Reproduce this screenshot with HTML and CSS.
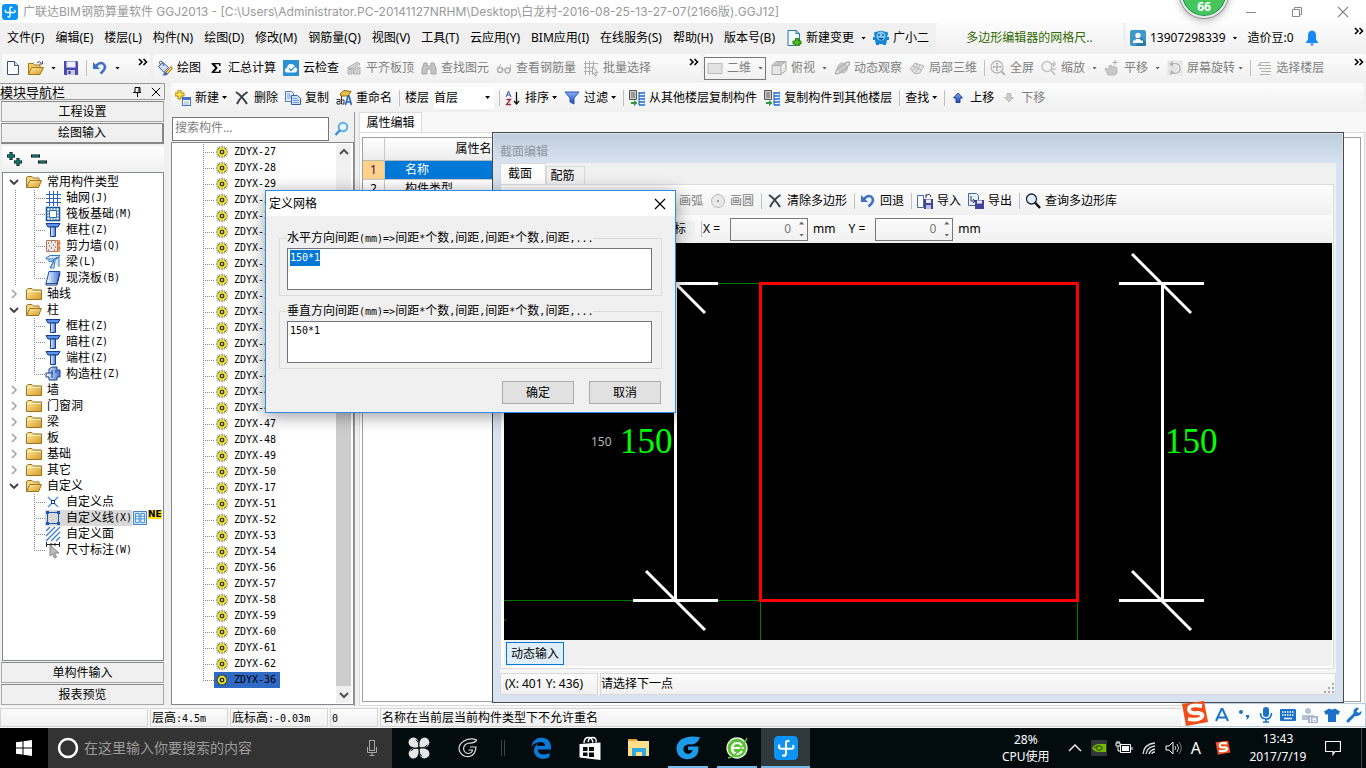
FILE: index.html
```html
<!DOCTYPE html>
<html lang="zh-CN">
<head>
<meta charset="utf-8">
<title>广联达BIM钢筋算量软件 GGJ2013</title>
<link rel="stylesheet" href="styles.css">
</head>
<body>
<svg class="defs" aria-hidden="true">
  <defs>
    <linearGradient id="gf" x1="0" y1="0" x2="1" y2="1"><stop offset="0" stop-color="#fff0b0"/><stop offset="1" stop-color="#d9981c"/></linearGradient>
    <linearGradient id="gb" x1="0" y1="0" x2="1" y2="0"><stop offset="0" stop-color="#fff"/><stop offset="1" stop-color="#3f74d8"/></linearGradient>
    <linearGradient id="gu" x1="0" y1="0" x2="0" y2="1"><stop offset="0" stop-color="#86aef5"/><stop offset="1" stop-color="#1d49b8"/></linearGradient>
  </defs>
  <symbol id="logo" viewBox="0 0 16 16"><rect width="16" height="16" rx="3" fill="#0c93f3"/><path d="M8 11.500V4.500Q8 2.800 9.800 3.300M3.500 6.300Q2.800 8.500 5 8.500h6.500q2 0 1.300-2M8 11.500q0 2-2 1.500" fill="none" stroke="#fff" stroke-width="1.400" stroke-linecap="round"/></symbol>
  <symbol id="new" viewBox="0 0 16 16"><path d="M2.500 1.500h7l4 4v9h-11z" fill="#fff" stroke="#36527c"/><path d="M9.500 1.500v4h4" fill="#d8e4f6" stroke="#36527c"/></symbol>
  <symbol id="open" viewBox="0 0 16 16"><path d="M.5 14V3.500h5l1 1.500H12v3" fill="#f3cf6d" stroke="#a87510"/><path d="M.5 14.500 3.500 7.500H15.500L12 14.500z" fill="url(#gf)" stroke="#a87510"/><path d="M9 2.500q3-2 4.500 1M14.500 1v3h-3" fill="none" stroke="#456"/></symbol>
  <symbol id="save" viewBox="0 0 16 16"><path d="M1 1h13l1 1v13H1z" fill="#4a4ab0"/><path d="M3.500 1.500h9v6h-9z" fill="#eef0ff"/><path d="M4 10h8v5H4z" fill="#c8c8e0"/><path d="M5.500 11h2v3h-2z" fill="#33338a"/></symbol>
  <symbol id="undo" viewBox="0 0 16 16"><path d="M4 6Q9 .8 12 4.500T8.500 13.500" fill="none" stroke="#3d70c9" stroke-width="2.600"/><path d="M1 2v7h7z" fill="#3d70c9"/></symbol>
  <symbol id="paint" viewBox="0 0 16 16"><path d="M1.500 6.500 6 2.500l5.500 5-4.500 5z" fill="#d2def2" stroke="#39588e"/><path d="M3.500 5Q1 0 5 1.500L7 6" fill="none" stroke="#39588e"/><path d="M8.500 13 14 6.500l1.500 1.500-5 6z" fill="#ffd466" stroke="#9a700d"/><path d="M5.500 15.500 8 12l3 2q-2 2-5.500 1.500z" fill="#2b63c5"/></symbol>
  <symbol id="sigma" viewBox="0 0 16 16"><path d="M3.500 3h9v3h-1.200L10.700 4.300H7L9.800 8 6.500 11.700h4.300L11.500 10h1.200v3H3.500v-1L7.200 8 3.500 4z" fill="#111"/></symbol>
  <symbol id="cloud" viewBox="0 0 16 16"><rect width="16" height="16" fill="#2a92d4"/><path d="M4 12.500Q1.300 12 2 9.500 2.500 8 4 8 4.500 4 8 4q3 0 4 3.200 2.500.5 2.200 3-.5 2.300-2.500 2.300z" fill="#fff"/><path d="m6 8.500 2 2L11.500 7" fill="none" stroke="#2a92d4" stroke-width="1.300"/></symbol>
  <symbol id="slab" viewBox="0 0 16 16"><path d="M1.500 8 11 2l3 2-7 5zM2 9.500h4V14H2zM7.500 9.500 14 7v7H7.500z" fill="#d0d0d0" stroke="#b0b0b0"/></symbol>
  <symbol id="bino" viewBox="0 0 16 16"><path d="M3 3h3v3h4V3h3l2 6v5h-5V9H6v5H1V9z" fill="#c4c4c4" stroke="#a5a5a5"/></symbol>
  <symbol id="glass" viewBox="0 0 16 16"><path d="M1.500 9 5 4M14.500 11V4.500" stroke="#b0b0b0"/><circle cx="4" cy="10" r="2.500" fill="none" stroke="#b0b0b0" stroke-width="1.500"/><circle cx="11.500" cy="10.500" r="2.500" fill="none" stroke="#b0b0b0" stroke-width="1.500"/><path d="M6.500 9.500h2.500" stroke="#b0b0b0"/></symbol>
  <symbol id="batch" viewBox="0 0 16 16"><path d="M2.500 1v14M6.500 1v14M10.500 1v7M1 3.500h14M1 7.500h9M1 11.500h8" stroke="#b0b0b0" fill="none"/><path d="m9.500 6.500 5.500 6h-2.500l1 3h-1.500l-1-2.500-1.500 1.500z" fill="#eee" stroke="#aaa"/></symbol>
  <symbol id="plane" viewBox="0 0 16 16"><rect x="1" y="3.500" width="14" height="10" fill="#e2e2e2" stroke="#bbb"/></symbol>
  <symbol id="cube" viewBox="0 0 16 16"><path d="M1 5.500h9v9H1zM1 5.500 5 1.500h10l-5 4zM10 14.500l5-4v-9" fill="#e6e6e6" stroke="#aaa"/><path d="M2 5 5.500 2H14l-4 3z" fill="#c4c4c4"/></symbol>
  <symbol id="orbit" viewBox="0 0 16 16"><circle cx="8.500" cy="8" r="5" fill="#ccc" stroke="#bbb"/><path d="M2 14Q0 12 6 7t9-5q2 2-4 7t-9 5z" fill="none" stroke="#b0b0b0" stroke-width="1.500"/></symbol>
  <symbol id="part3d" viewBox="0 0 16 16"><path d="m1 9 5-6 9 3-4 7-5 1zM3.500 6l9 4M6 13l5-8M3.500 11l5-7" fill="#e2e2e2" stroke="#b5b5b5"/></symbol>
  <symbol id="full" viewBox="0 0 16 16"><circle cx="7" cy="7" r="6" fill="#f2f2f2" stroke="#b8b8b8" stroke-width="1.300"/><path d="M7 3v8M3 7h8M6 4l1-1 1 1M6 10l1 1 1-1M4 6 3 7l1 1M10 6l1 1-1 1" stroke="#a5a5a5" fill="none"/><path d="m11.500 11.500 3.500 3.500" stroke="#b5b5b5" stroke-width="2"/></symbol>
  <symbol id="zoomi" viewBox="0 0 16 16"><circle cx="6" cy="6.500" r="5" fill="#f4f4f4" stroke="#c2c2c2" stroke-width="1.500"/><path d="m10 10 4 5" stroke="#c2c2c2" stroke-width="2"/><path d="M13 1v6M10 4h5M11 9h4" stroke="#b0b0b0"/></symbol>
  <symbol id="pan" viewBox="0 0 16 16"><path d="M4 15 1 9l2-1 2 2V6l2-1 1.500 1.500L10 6l1.500 1.500 1.500 0V13l-2 2z" fill="#c8c8c8" stroke="#bababa"/><path d="M11 0v5M8.500 2.500h5" stroke="#aaa"/></symbol>
  <symbol id="rot" viewBox="0 0 16 16"><path d="M.5.500h15v15H.5z" fill="#e4e4e4"/><path d="M4 13Q14 15 13 7 11 2 5 4" fill="none" stroke="#fff" stroke-width="3"/><path d="M4 13Q14 15 13 7 11 2 5 4" fill="none" stroke="#b5b5b5" stroke-width="1.500"/><path d="M6 1v6L2 4zM3 15l1-5 4 3z" fill="#b5b5b5"/></symbol>
  <symbol id="floors" viewBox="0 0 16 16"><path d="M4 2.500h10M5 5.500h10M3 8.500h12M5 11.500h10M4 14.500h10" stroke="#b0b0b0"/><path d="M1 6 5 2v4z" fill="#bbb"/></symbol>
  <symbol id="add" viewBox="0 0 16 16"><path d="M3 0h3v3h3v3H6v3H3V6H0V3h3z" fill="#ffe34d" stroke="#a8860b"/><rect x="7.500" y="7.500" width="8" height="8" fill="#fff" stroke="#4573c4"/><path d="M8 8h7v2H8z" fill="#4573c4"/><path d="M9 12h5M9 14h5" stroke="#86aee8"/></symbol>
  <symbol id="del" viewBox="0 0 16 16"><path d="M2 2q6 4 11 12M13.500 2Q7 6 3 14" fill="none" stroke="#3a3e48" stroke-width="2"/></symbol>
  <symbol id="copy" viewBox="0 0 16 16"><path d="M.5 1.500h6l2 2v8h-8z" fill="#e4eefc" stroke="#4f79b8"/><path d="M6.500 5.500h6l3 3v6h-9z" fill="#cfe0f8" stroke="#375f9f"/><path d="M2 4h3M2 6h4M2 8h4M8 8.500h4M8 10.500h6M8 12.500h6" stroke="#6e98d8"/></symbol>
  <symbol id="rename" viewBox="0 0 16 16"><path d="m4 4 4-3.500 7 1L12 6 5 6z" fill="#f0c04a" stroke="#89640c"/><path d="M.5 9.500H4V14H1v-2.500h3M5.500 6v8H8v-4H6" fill="none" stroke="#333"/><path d="m9.500 15 2.500-9h1l2.500 9M10.500 12h4" fill="none" stroke="#2665c0" stroke-width="1.600"/></symbol>
  <symbol id="sort" viewBox="0 0 16 16"><path d="m1 7 2.500-6L6 7M2 5h3" fill="none" stroke="#2b56a8"/><path d="M1.500 9.500h4l-4 5h4.500" fill="none" stroke="#a22b3b" stroke-width="1.300"/><path d="M11.500 2v11M9 11l2.500 3 2.500-3" fill="none" stroke="#111" stroke-width="1.300"/></symbol>
  <symbol id="filter" viewBox="0 0 16 16"><path d="M1 2h14L10 8v6l-4-2V8z" fill="url(#gu)" stroke="#2b57b8"/></symbol>
  <symbol id="xfer" viewBox="0 0 16 16"><path d="M.5.500h7v9h-7z" fill="#ccc" stroke="#555"/><path d="M2 3h4M2 5h4M2 7h4" stroke="#666"/><path d="M10 3h5l1-1M10 6h5l1-1M10 9h5l1-1M10 12h5l1-1M10 15h5l1-1" fill="none" stroke="#4c8de0" stroke-width="2"/><path d="M10 2v13" stroke="#2a4e88"/><path d="M2 12h3v-2l3.500 3L5 16v-2H2z" fill="#2a9a38"/></symbol>
  <symbol id="up" viewBox="0 0 16 16"><path d="m8 3 4.500 5H10v4.500H6V8H3.500z" fill="url(#gu)" stroke="#1f4392"/></symbol>
  <symbol id="down" viewBox="0 0 16 16"><path d="m8 12 4.500-4.500H10V3.500H6v4H3.500z" fill="#ccc" stroke="#bbb"/></symbol>
  <symbol id="docplus" viewBox="0 0 16 16"><path d="M2 .5h8l3.500 3v12H2z" fill="#eef9ff" stroke="#2d7896"/><path d="M10 .5v3h3.500" fill="#9fd4ea" stroke="#2d7896"/><path d="M9.500 8.500h3V11H15v3h-2.500v2h-3v-2H7v-3h2.500z" fill="#49c11b" stroke="#287a0b"/></symbol>
  <symbol id="robot" viewBox="0 0 16 16"><path d="M1 4Q1 1 3.500 2 8-.5 12.500 2 15 1 15 4l-1 3h2v3h-2l-1 5h-3v-1H6v1H3l-1-5H0V7h2z" fill="#1586d6"/><circle cx="8" cy="6" r="4.500" fill="#7cc8f8"/><path d="M6 4v2M10 4v2M6 8q2 2 4 0" stroke="#064a87" fill="none" stroke-width="1.200"/></symbol>
  <symbol id="user" viewBox="0 0 16 16"><rect width="16" height="16" rx="2" fill="#3d98cb"/><path d="M9 5 15.900 12v4H6z" fill="#2878a9"/><circle cx="8" cy="5.500" r="2.700" fill="#fff"/><path d="M3 13V10.500h2l1-1.500h4l1 1.500h2V13z" fill="#fff"/></symbol>
  <symbol id="bell" viewBox="0 0 16 16"><path d="M8 .5q4 .5 4 5v4l2.500 3.500h-13L4 9.500v-4q0-4.500 4-5zM6 13.500h4L8 16z" fill="#1687f5"/></symbol>
  <symbol id="more" viewBox="0 0 10 8"><path d="M1 1l3 3-3 3M5.500 1l3 3-3 3" fill="none" stroke="#000" stroke-width="1.600"/></symbol>
  <symbol id="mag" viewBox="0 0 16 16"><circle cx="9" cy="6" r="4.300" fill="#eaf6ff" stroke="#5aaeea" stroke-width="2"/><path d="m6 9-4.500 5" stroke="#3c8fd8" stroke-width="2.500"/></symbol>
  <symbol id="find" viewBox="0 0 16 16"><circle cx="6.500" cy="6" r="5" fill="#dff0fc" stroke="#182434" stroke-width="1.300"/><path d="m10 9.500 5 5.500" stroke="#111" stroke-width="2.500"/></symbol>
  <symbol id="folder" viewBox="0 0 16 16"><path d="M.5 13V4L2 2.500h4L7.500 4h8v9.500H.5z" fill="url(#gf)" stroke="#9b7423"/><path d="M1 5.500h14" stroke="#fff3c4"/></symbol>
  <symbol id="fopen" viewBox="0 0 16 16"><path d="M.5 13V3.500l1.500-1h4L7.500 4H13v3" fill="#f6d67f" stroke="#9b7423"/><path d="M.5 13.500 4 6.500h11.500L12.500 13.500z" fill="url(#gf)" stroke="#9b7423"/></symbol>
  <symbol id="grid" viewBox="0 0 16 16"><path d="M4.500 1v14M8.500 1v14M12.500 1v14M1 4.500h14M1 8.500h14M1 12.500h14" stroke="#2c5fc4"/><path d="M14 4h2v1h-2zM14 8h2v1h-2zM14 12h2v1h-2zM4 14h1v2H4zM8 14h1v2H8zM12 14h1v2h-1z" fill="#2c5fc4"/></symbol>
  <symbol id="raft" viewBox="0 0 16 16"><path d="M1.500 1.500h13v13h-13z" fill="#fff" stroke="#134f8c" stroke-width="1.500"/><path d="M4.500 4.500h7v7h-7zM5 1v3M8 1v3M11 1v3M5 12v3M8 12v3M11 12v3M1 5h3M1 8h3M1 11h3M12 5h3M12 8h3M12 11h3" fill="none" stroke="#2a70b8"/></symbol>
  <symbol id="col" viewBox="0 0 16 16"><path d="M1 1.500h14l-2 3.500H3z" fill="#5c92ea" stroke="#123e94"/><path d="M5.500 5h5v9.500h-5z" fill="url(#gb)" stroke="#123e94"/></symbol>
  <symbol id="wall" viewBox="0 0 16 16"><path d="M1.500 2.500h11v11h-11z" fill="#eee5df" stroke="#b7765c"/><path d="M14 2v12M12.500 5h3M12.500 10h3" fill="none" stroke="#d67d28" stroke-width="1.500"/><path d="M3 5h1M6 4h1M8 7h1M4 8h1M6 10h1M10 9h1M3 12h1M9 12h1M10 4h1" stroke="#444"/></symbol>
  <symbol id="beam" viewBox="0 0 16 16"><path d="M1 4 5 1.500h10L11 5H1zM4 5v3l5-2-4 8h4l1-8 4-3v10" fill="#d7eafc" stroke="#3479bd"/><path d="m6 8 6-5M6 13l3-6" stroke="#3479bd"/></symbol>
  <symbol id="slabb" viewBox="0 0 16 16"><path d="M4 1.500h11L12 13.500H1z" fill="url(#gb)" stroke="#1d4ba2"/><path d="M1 13.500v1.500h11l3-12" fill="none" stroke="#16366e"/></symbol>
  <symbol id="gz" viewBox="0 0 16 16"><path d="M4 3 7 1h5v3h3v7h-3v3H7l-3 0v-3H1V7h3z" fill="url(#gb)" stroke="#1a3e8a"/><path d="M7 4v8M4 7h4M11 4v3" stroke="#1a3e8a"/></symbol>
  <symbol id="pt" viewBox="0 0 16 16"><path d="m3 3 10 10M13 3 3 13" stroke="#4b94cc" stroke-width="1.400"/><rect x="6.500" y="6.500" width="3" height="3" fill="#fff" stroke="#123e94"/></symbol>
  <symbol id="ln" viewBox="0 0 16 16"><path d="M2.500 2.500h11v11h-11z" fill="none" stroke="#1958b5"/><path d="M1 1h3v3H1zM12 1h3v3h-3zM1 12h3v3H1zM12 12h3v3h-3z" fill="#1958b5"/></symbol>
  <symbol id="area" viewBox="0 0 16 16"><path d="m1 5 4-4M1 10l9-9M1 15 15 1M6 15l9-9M11 15l4-4" stroke="#3c7ccd" stroke-width="1.300"/></symbol>
  <symbol id="dimn" viewBox="0 0 16 16"><path d="M1.500 0v5M14.500 0v5M1 2.500h14M6 1v3M10 1v3" stroke="#222"/><path d="m5 3 9 8H9.500l2 4-2 1-2-4L5 14z" fill="#bbb" stroke="#888"/></symbol>
  <symbol id="book" viewBox="0 0 16 16"><path d="M.5.500h15v15H.5z" fill="#c5e4fb" stroke="#2a6eb0"/><path d="M3 3h4v10H3zM9 3h4v10H9zM3 6h4M3 9h4M9 6h4M9 9h4" fill="#fff" stroke="#2a80cc"/></symbol>
  <symbol id="gear" viewBox="0 0 12 12"><path d="M6 0v12M0 6h12M1.500 1.500l9 9M10.500 1.500l-9 9M3.800.5v11M8.200.5v11M.5 3.800h11M.5 8.200h11" stroke="#3e3b00" stroke-width=".8"/><circle cx="6" cy="6" r="3.400" fill="none" stroke="#f0ec16" stroke-width="1.800"/><circle cx="6" cy="6" r="1.500" fill="#ffc" stroke="#222"/></symbol>
  <symbol id="circ" viewBox="0 0 16 16"><circle cx="8" cy="8" r="6.500" fill="#e9e9e9" stroke="#bbb"/><circle cx="8" cy="8" r="1" fill="#888"/></symbol>
  <symbol id="imp" viewBox="0 0 16 16"><path d="M.5 2.500h6v12h-6z" fill="#fff" stroke="#4468a0"/><path d="M7 6h9v10H7z" fill="#43439f"/><path d="M9 6.500h5V10H9z" fill="#e9ecff"/><path d="M9 12h5v4H9z" fill="#bcbcdc"/><path d="M9 1v4M9 3q4-4 5 1" fill="none" stroke="#335"/></symbol>
  <symbol id="exp" viewBox="0 0 16 16"><path d="M.5.500h8l2 2v10H.5z" fill="#e5effc" stroke="#4468a0"/><path d="M7 7h9v9H7z" fill="#43439f"/><path d="M9 7.500h5v3H9z" fill="#e9ecff"/><path d="M3 3v5h4M5 6l2 2-2 2" fill="none" stroke="#335"/></symbol>
  <symbol id="chev" viewBox="0 0 10 10"><path d="m1 3 4 4 4-4" fill="none" stroke="#3c3c3c" stroke-width="1.800"/></symbol>
  <symbol id="chevr" viewBox="0 0 10 10"><path d="m3 1 4 4-4 4" fill="none" stroke="#a2a2a2" stroke-width="1.500"/></symbol>
  <symbol id="close" viewBox="0 0 12 12"><path d="m1 1 10 10M11 1 1 11" fill="none" stroke="currentColor" stroke-width="1.200"/></symbol>
  <symbol id="sogou" viewBox="0 0 28 26"><path d="M1 3 23 0 27 21 5 25z" fill="#f04e18"/><path d="M21 5Q8 3 8 8t9 4q7 1 3 5-4 2.500-13 1" fill="none" stroke="#fff" stroke-width="3.800"/></symbol>
</svg>

<div class="app">
  <header class="title">
    <svg class="i"><use href="#logo"/></svg>
    <h1>广联达BIM钢筋算量软件 GGJ2013 - [C:\Users\Administrator.PC-20141127NRHM\Desktop\白龙村-2016-08-25-13-27-07(2166版).GGJ12]</h1>
    <div class="winbtns">
      <button aria-label="最小化"><svg class="w"><path d="M1 6.500h10" stroke="#888"/></svg></button>
      <button aria-label="还原"><svg class="w"><path d="M1.500 3.500h7v7h-7zM3.500 3V1.500h7v7H9" fill="none" stroke="#888"/></svg></button>
      <button aria-label="关闭"><svg class="w"><use href="#close"/></svg></button>
    </div>
  </header>
  <div class="bubble">66</div>

  <div class="menubar">
    <nav class="menu">
      <button>文件(F)</button><button>编辑(E)</button><button>楼层(L)</button><button>构件(N)</button><button>绘图(D)</button><button>修改(M)</button><button>钢筋量(Q)</button><button>视图(V)</button><button>工具(T)</button><button>云应用(Y)</button><button>BIM应用(I)</button><button>在线服务(S)</button><button>帮助(H)</button><button>版本号(B)</button>
    </nav>
    <div class="extra">
      <button class="t"><svg class="i"><use href="#docplus"/></svg>新建变更<i class="caret wide"></i></button>
      <button class="t"><svg class="i"><use href="#robot"/></svg>广小二</button>
    </div>
    <div class="band notice"><a href="#">多边形编辑器的网格尺..</a></div>
    <div class="band account">
      <button class="t"><svg class="i"><use href="#user"/></svg>13907298339<i class="caret wide"></i></button>
      <span>造价豆:0</span>
      <button aria-label="通知"><svg class="i"><use href="#bell"/></svg></button>
      <button class="more" aria-label="更多"><svg><use href="#more"/></svg></button>
    </div>
  </div>

  <div class="bars">
    <div class="band b1">
      <button class="t" aria-label="新建"><svg class="i"><use href="#new"/></svg></button>
      <button class="t" aria-label="打开"><svg class="i"><use href="#open"/></svg><i class="caret wide"></i></button>
      <button class="t" aria-label="保存"><svg class="i"><use href="#save"/></svg></button>
      <i class="sep"></i>
      <button class="t" aria-label="撤销"><svg class="i"><use href="#undo"/></svg><i class="caret wide"></i></button>
      <button class="more" aria-label="更多"><svg><use href="#more"/></svg></button>
    </div>
    <div class="band b2">
      <button class="t"><svg class="i"><use href="#paint"/></svg>绘图</button>
      <button class="t"><svg class="i"><use href="#sigma"/></svg>汇总计算</button>
      <button class="t"><svg class="i"><use href="#cloud"/></svg>云检查</button>
      <button class="t off"><svg class="i"><use href="#slab"/></svg>平齐板顶</button>
      <button class="t off"><svg class="i"><use href="#bino"/></svg>查找图元</button>
      <button class="t off"><svg class="i"><use href="#glass"/></svg>查看钢筋量</button>
      <button class="t off"><svg class="i"><use href="#batch"/></svg>批量选择</button>
      <button class="more" aria-label="更多"><svg><use href="#more"/></svg></button>
    </div>
    <div class="band b3">
      <button class="t off boxed"><svg class="i"><use href="#plane"/></svg>二维<i class="caret wide"></i></button>
      <button class="t off"><svg class="i"><use href="#cube"/></svg>俯视<i class="caret wide"></i></button>
      <button class="t off"><svg class="i"><use href="#orbit"/></svg>动态观察</button>
      <button class="t off"><svg class="i"><use href="#part3d"/></svg>局部三维</button>
      <i class="sep"></i>
      <button class="t off"><svg class="i"><use href="#full"/></svg>全屏</button>
      <button class="t off"><svg class="i"><use href="#zoomi"/></svg>缩放<i class="caret wide"></i></button>
      <button class="t off"><svg class="i"><use href="#pan"/></svg>平移<i class="caret wide"></i></button>
      <button class="t off"><svg class="i"><use href="#rot"/></svg>屏幕旋转<i class="caret"></i></button>
      <i class="sep"></i>
      <button class="t off"><svg class="i"><use href="#floors"/></svg>选择楼层</button>
      <button class="more" aria-label="更多"><svg><use href="#more"/></svg></button>
    </div>
  </div>

  <main class="main">
    <aside class="nav">
      <div class="navhead"><h2>模块导航栏</h2><button aria-label="固定"><svg class="w"><path d="M4 1.500h5v5H4zM2 6.500h8M6.500 7v4M8 2v4" fill="none" stroke="#000"/></svg></button><button aria-label="关闭"><svg class="c"><use href="#close"/></svg></button></div>
      <button class="navbtn">工程设置</button>
      <button class="navbtn cur">绘图输入</button>
      <div class="navtools">
        <button aria-label="全部展开"><svg width="18" height="16"><path d="M1 5h8M5 1v8M8 11h8M12 7v8" stroke="#000" stroke-width="3"/><path d="M1.500 5h7M5 1.500v7M8.500 11h7M12 7.500v7" stroke="#0b8a84" stroke-width="1.500"/></svg></button>
        <button aria-label="全部折叠"><svg width="18" height="16"><path d="M1 5h9M8 11h9" stroke="#000" stroke-width="3"/><path d="M2 5h7M9 11h7" stroke="#0b8a84" stroke-width="1.500"/></svg></button>
      </div>
      <ul class="tree">
        <li class="p"><svg class="c"><use href="#chev"/></svg><svg class="i"><use href="#fopen"/></svg>常用构件类型</li>
        <li><ul class="kids line">
          <li><svg class="i"><use href="#grid"/></svg>轴网<span class="m">(J)</span></li>
          <li><svg class="i"><use href="#raft"/></svg>筏板基础<span class="m">(M)</span></li>
          <li><svg class="i"><use href="#col"/></svg>框柱<span class="m">(Z)</span></li>
          <li><svg class="i"><use href="#wall"/></svg>剪力墙<span class="m">(Q)</span></li>
          <li><svg class="i"><use href="#beam"/></svg>梁<span class="m">(L)</span></li>
          <li><svg class="i"><use href="#slabb"/></svg>现浇板<span class="m">(B)</span></li>
        </ul></li>
        <li class="p"><svg class="c"><use href="#chevr"/></svg><svg class="i"><use href="#folder"/></svg>轴线</li>
        <li class="p"><svg class="c"><use href="#chev"/></svg><svg class="i"><use href="#fopen"/></svg>柱</li>
        <li><ul class="kids line">
          <li><svg class="i"><use href="#col"/></svg>框柱<span class="m">(Z)</span></li>
          <li><svg class="i"><use href="#col"/></svg>暗柱<span class="m">(Z)</span></li>
          <li><svg class="i"><use href="#col"/></svg>端柱<span class="m">(Z)</span></li>
          <li><svg class="i"><use href="#gz"/></svg>构造柱<span class="m">(Z)</span></li>
        </ul></li>
        <li class="p"><svg class="c"><use href="#chevr"/></svg><svg class="i"><use href="#folder"/></svg>墙</li>
        <li class="p"><svg class="c"><use href="#chevr"/></svg><svg class="i"><use href="#folder"/></svg>门窗洞</li>
        <li class="p"><svg class="c"><use href="#chevr"/></svg><svg class="i"><use href="#folder"/></svg>梁</li>
        <li class="p"><svg class="c"><use href="#chevr"/></svg><svg class="i"><use href="#folder"/></svg>板</li>
        <li class="p"><svg class="c"><use href="#chevr"/></svg><svg class="i"><use href="#folder"/></svg>基础</li>
        <li class="p"><svg class="c"><use href="#chevr"/></svg><svg class="i"><use href="#folder"/></svg>其它</li>
        <li class="p"><svg class="c"><use href="#chev"/></svg><svg class="i"><use href="#fopen"/></svg>自定义</li>
        <li><ul class="kids">
          <li><svg class="i"><use href="#pt"/></svg>自定义点</li>
          <li><span class="sel"><svg class="i"><use href="#ln"/></svg>自定义线<span class="m">(X)</span></span><svg class="bk"><use href="#book"/></svg><b class="ne">NE</b></li>
          <li><svg class="i"><use href="#area"/></svg>自定义面</li>
          <li><svg class="i"><use href="#dimn"/></svg>尺寸标注<span class="m">(W)</span></li>
        </ul></li>
      </ul>
      <button class="navbtn">单构件输入</button>
      <button class="navbtn">报表预览</button>
    </aside>

    <div class="work">
      <div class="band b4">
        <button class="t"><svg class="i"><use href="#add"/></svg>新建<i class="caret"></i></button>
        <button class="t"><svg class="i"><use href="#del"/></svg>删除</button>
        <button class="t"><svg class="i"><use href="#copy"/></svg>复制</button>
        <button class="t"><svg class="i"><use href="#rename"/></svg>重命名</button>
        <i class="sep"></i>
        <label for="floor">楼层</label>
        <span class="pick"><select id="floor"><option>首层</option></select><i class="caret"></i></span>
        <i class="sep"></i>
        <button class="t"><svg class="i"><use href="#sort"/></svg>排序<i class="caret"></i></button>
        <button class="t"><svg class="i"><use href="#filter"/></svg>过滤<i class="caret"></i></button>
        <i class="sep"></i>
        <button class="t"><svg class="i"><use href="#xfer"/></svg>从其他楼层复制构件</button>
        <button class="t"><svg class="i"><use href="#xfer"/></svg>复制构件到其他楼层</button>
        <i class="sep"></i>
        <button class="t">查找<i class="caret"></i></button>
        <i class="sep"></i>
        <button class="t"><svg class="i"><use href="#up"/></svg>上移</button>
        <button class="t off"><svg class="i"><use href="#down"/></svg>下移</button>
      </div>
      <div class="cols">
        <section class="comps">
          <div class="search"><input type="text" placeholder="搜索构件…" aria-label="搜索构件"><button aria-label="搜索"><svg class="i"><use href="#mag"/></svg></button></div>
          <div class="listbox">
            <ul class="list" id="list"></ul>
            <div class="scroll"><svg class="c"><path d="m1 7 4-4 4 4" fill="none" stroke="#505050" stroke-width="2"/></svg><i></i><svg class="c"><path d="m1 3 4 4 4-4" fill="none" stroke="#505050" stroke-width="2"/></svg></div>
          </div>
        </section>
        <section class="props">
          <div class="ptabs"><button class="ptab">属性编辑</button></div>
          <div class="pbody">
            <div class="pbox">
              <table class="ptable">
                <thead><tr><th class="n"></th><th class="k">属性名称</th><th>属性值</th><th class="a">附加</th></tr></thead>
                <tbody>
                  <tr class="on"><td class="n">1</td><td>名称</td><td>ZDYX-36</td><td></td></tr>
                  <tr><td class="n">2</td><td>构件类型</td><td>自定义线</td><td></td></tr>
                </tbody>
              </table>
            </div>
          </div>
        </section>
      </div>
    </div>
  </main>

  <footer class="status">
    <span class="s1"></span><span class="s2">层高<b class="m">:4.5m</b></span><span class="s3">底标高<b class="m">:-0.03m</b></span><span class="s4"><b class="m">0</b></span><span class="s5">名称在当前层当前构件类型下不允许重名</span>
  </footer>

  <section class="editor" aria-label="截面编辑">
    <h2>截面编辑</h2>
    <div class="client">
      <div class="etabs"><button class="cur">截面</button><button>配筋</button></div>
      <div class="page">
        <div class="band e1">
          <button class="t off">画弧</button>
          <button class="t off"><svg class="i"><use href="#circ"/></svg>画圆</button>
          <i class="sep"></i>
          <button class="t"><svg class="i"><use href="#del"/></svg>清除多边形</button>
          <i class="sep"></i>
          <button class="t"><svg class="i"><use href="#undo"/></svg>回退</button>
          <i class="sep"></i>
          <button class="t"><svg class="i"><use href="#imp"/></svg>导入</button>
          <button class="t"><svg class="i"><use href="#exp"/></svg>导出</button>
          <i class="sep"></i>
          <button class="t"><svg class="i"><use href="#find"/></svg>查询多边形库</button>
        </div>
        <div class="band e2">
          <span class="coord">坐标</span>
          <i class="sep"></i>
          <label for="cx">X =</label><span class="spin"><input id="cx" type="text" value="0"><span><i></i><i></i></span></span><span>mm</span>
          <label for="cy" class="y">Y =</label><span class="spin"><input id="cy" type="text" value="0"><span><i></i><i></i></span></span><span>mm</span>
        </div>
        <svg class="canvas" role="img" aria-label="截面图">
          <path d="M0 40.500h256M0 357.500h256M256.500 357v500M573.500 357v500M0 376l2 2" fill="none" stroke="#007800"/>
          <path d="M256.500 40.500h317v317h-317z" fill="none" stroke="#f00" stroke-width="3"/>
          <g stroke="#fff" stroke-width="3" fill="none">
            <path d="M129 40.500h85M129 357.500h85M171.500 40v317M142 11l59 59M142 328l59 59"/>
            <path d="M615 40.500h85M615 357.500h85M658.500 40v317M628 11l59 59M628 328l59 59"/>
          </g>
          <text class="dim" x="116" y="210">150</text>
          <text class="dim" x="661" y="210">150</text>
          <text class="dims" x="87" y="203">150</text>
        </svg>
        <div class="dyn"><button>动态输入</button></div>
      </div>
      <div class="estat"><span class="xy">(X: 401 Y: 436)</span><span class="msg">请选择下一点<svg width="12" height="12"><path d="M9 2h2M9 6h2M9 10h2M5 6h2M5 10h2M1 10h2" stroke="#aaa" stroke-width="2"/></svg></span></div>
    </div>
  </section>

  <form class="dialog" role="dialog" aria-label="定义网格">
    <div class="dtitle"><h2>定义网格</h2><button type="button" aria-label="关闭"><svg class="w"><use href="#close"/></svg></button></div>
    <div class="dbody">
      <fieldset><legend><label for="hs">水平方向间距<span class="m">(mm)=&gt;</span>间距<span class="m">*</span>个数<span class="m">,</span>间距<span class="m">,</span>间距<span class="m">*</span>个数<span class="m">,</span>间距<span class="m">,...</span></label></legend><textarea id="hs">150*1</textarea></fieldset>
      <fieldset><legend><label for="vs">垂直方向间距<span class="m">(mm)=&gt;</span>间距<span class="m">*</span>个数<span class="m">,</span>间距<span class="m">,</span>间距<span class="m">*</span>个数<span class="m">,</span>间距<span class="m">,...</span></label></legend><textarea id="vs">150*1</textarea></fieldset>
      <div class="acts"><button type="button">确定</button><button type="button">取消</button></div>
    </div>
  </form>

  <div class="ime">
    <svg width="28" height="26"><use href="#sogou"/></svg>
    <div>
      <svg width="16" height="16"><path d="M2 14 7.500 2h1L14 14M4 10.500h8" fill="none" stroke="#1b72c8" stroke-width="2"/></svg>
      <svg width="16" height="16"><circle cx="5" cy="5" r="2" fill="#1b72c8"/><path d="M10 8h3q1 3-3 5 2-3 0-3z" fill="#1b72c8"/></svg>
      <svg width="16" height="16"><rect x="5" y="0" width="6" height="10" rx="3" fill="#1b72c8"/><path d="M2.500 6q0 6 5.500 6t5.500-6M8 12v3M5 15h6" fill="none" stroke="#1b72c8" stroke-width="1.600"/></svg>
      <svg width="16" height="16"><rect y="2" width="16" height="12" rx="1" fill="#1b72c8"/><path d="M2 5h12M2 8h12" stroke="#fff" stroke-width="1.500" stroke-dasharray="1.500 1"/><path d="M4 11.500h8" stroke="#fff" stroke-width="1.500"/></svg>
      <svg width="16" height="16"><circle cx="6" cy="4" r="3" fill="#b7c2d6"/><path d="M0 13V8h12v5z" fill="#b7c2d6"/><rect x="6" y="9" width="10" height="7" fill="#a3b0c9"/><path d="M8.500 10v5M14 11h-3v3.500h3v-2h-3" fill="none" stroke="#fff"/></svg>
      <svg width="16" height="16"><path d="M5 1.500q3 2 6 0l5 3-2 3.500-2-1V15H4V7L2 8 0 4.500z" fill="#1b72c8"/></svg>
      <svg width="16" height="16"><path d="m2 14 7-7" stroke="#1b72c8" stroke-width="3" stroke-linecap="round"/><path d="M13 1Q8 0 7.500 5t4 4T15.500 4L12.500 6 10.500 4.500z" fill="#1b72c8"/></svg>
    </div>
  </div>

  <div class="taskbar">
    <button class="start" aria-label="开始"><svg width="16" height="16"><path d="M0 2.300 6.500 1.400V7.500H0zM7.500 1.200 16 0v7.500H7.500zM0 8.500h6.500v6.100L0 13.700zM7.500 8.500H16V16l-8.500-1.200z" fill="#fff"/></svg></button>
    <label class="cortana"><svg width="22" height="22"><circle cx="11" cy="11" r="9" fill="none" stroke="#fff" stroke-width="2.500"/></svg><input type="text" placeholder="在这里输入你要搜索的内容" aria-label="搜索"><svg width="12" height="18"><rect x="3.500" y="1.500" width="5" height="10" fill="none" stroke="#a5a5a5"/><path d="M1.500 8v5.500h9V8M6 13.500v3M3.500 16.500h5" fill="none" stroke="#a5a5a5"/></svg></label>
    <div class="apps">
      <button aria-label="应用"><svg width="22" height="22"><g fill="#e6e6e6"><path id="pt1" d="M10.500 10.300Q6 11.500 2 9-1 5 2 2 6-1 9.500 2.500 11.500 6 10.500 10.300z"/><use href="#pt1" transform="rotate(90 11 11)"/><use href="#pt1" transform="rotate(180 11 11)"/><use href="#pt1" transform="rotate(270 11 11)"/></g><path d="M11 11Q11.500 5 8 2.500M11 11q6 .5 8.500-3M11 11q-.5 6 3 8.500M11 11q-6-.5-8.500 3" fill="none" stroke="#020b0e"/></svg></button>
      <button aria-label="应用"><svg width="20" height="20"><path d="M19 2Q16 5.500 11 5 6 6 5.500 10.500 6 15 10 15.500q4 0 4.500-3.500H10.500M19 2Q12-.5 6 3-.5 7 1.500 13q3 6.500 10 5.500 6-1.500 6.500-9.500h-6" fill="none" stroke="#ddd" stroke-width="1.200"/></svg></button>
      <i class="tsep"></i>
      <button aria-label="Edge"><svg width="20" height="22"><path d="M0 10Q2 1 10.500.500 19 1 20 9v3.500H6.500q1 5 6 5 3 0 6-1.500v4q-3 2-7 2-7-1-8.500-7-.5-6 5-9.500-2 1-2 3.500h8Q14 5 9.500 5 3 5.500 0 10z" fill="#0a7ad8"/></svg></button>
      <button aria-label="商店"><svg width="22" height="24"><path d="M.5 8 21.500 6.500V24L.5 21.500z" fill="#fff"/><path d="M5 7Q5 2 9 1.500t5 5M9 6q1-5 5-4.500t3 5" fill="none" stroke="#fff" stroke-width="1.400"/><path d="M4 11h4.500v4H4zM10 11h5v4h-5zM4 16.500h4.500V20H4zM10 16.500h5V21h-5z" fill="#020b0e"/></svg></button>
      <button aria-label="文件资源管理器"><svg width="22" height="20"><path d="M0 1h8l2 2h11v15H0z" fill="#ffe08a"/><path d="M0 1h8l2 2H0z" fill="#e3a53a"/><path d="M4 18V10h14v8h-4v-4H8v4z" fill="#31a9e0"/></svg></button>
      <button class="run" aria-label="广联达"><svg width="24" height="24"><path d="M24 1q-2 6.500-8 7.500-7-1-8.500 3.500-.5 5 4.500 6 4-.5 4.500-4H12v-3.500h10.500Q23 20 16 22.500 7 25 2 18.500-2 10 4.500 4 11-1 24 1z" fill="#1d9be8"/></svg></button>
      <button class="run" aria-label="浏览器"><svg width="22" height="24"><circle cx="11" cy="12" r="10" fill="#5cc234" stroke="#e8f7e0" stroke-width="1.300"/><path d="M16 15q-2 3-5 3-5-1-5-6 1-5 5-5 5 0 5.500 5H7" fill="none" stroke="#fff" stroke-width="2.200"/><path d="M2 22Q12 20 21 2" fill="none" stroke="#5cc234" stroke-width="1.500"/></svg></button>
      <button class="run act" aria-label="GGJ2013"><svg width="24" height="24"><use href="#logo"/></svg></button>
    </div>
    <div class="tray">
      <div class="cpu">28%<br>CPU使用</div>
      <div class="ticons">
        <svg width="16" height="16"><path d="m2 11 6-6 6 6" fill="none" stroke="#fff" stroke-width="1.300"/></svg>
        <svg width="16" height="16"><rect width="16" height="16" fill="#30363c"/><path d="M1 8q3-4 6-4h8v8H8Q3 12 1 8z" fill="#76b900"/><path d="M3 8q3-3 6-2t2 3-4 1-1-3" fill="none" stroke="#20300a"/></svg>
        <svg width="18" height="16"><path d="M1 3h4v3H1zM2 1v2M4 1v2M3 6v5h2" fill="none" stroke="#fff"/><path d="M5.500 4.500h10v8h-10zM17 7v3" fill="none" stroke="#fff"/><path d="M7 6h7v5H7z" fill="#fff"/></svg>
        <svg width="16" height="16"><path d="M2 14Q3 4 14 3M5 14q1-7 9-8M8 14q1-4 6-5M11 14q0-2 3-2" fill="none" stroke="#ddd" stroke-width="1.300"/></svg>
        <svg width="18" height="16"><path d="M1 6h3l4-4v12l-4-4H1z" fill="none" stroke="#fff"/><path d="M10 6q1.500 2 0 4M12 4q3 4 0 8" fill="none" stroke="#ccc"/><path d="M14 2q4.500 6 0 12" fill="none" stroke="#777"/></svg>
        <span>A</span>
        <svg class="sg" width="16" height="16" viewBox="0 0 28 26"><use href="#sogou" width="28" height="26"/></svg>
      </div>
      <div class="clock">13:43<br>2017/7/19</div>
      <button class="note" aria-label="操作中心"><svg width="16" height="16"><path d="M.5 1.500h15v10H10L8 14.500v-3H.5z" fill="none" stroke="#fff" stroke-width="1.200"/></svg></button>
    </div>
  </div>
</div>
<script src="script.js"></script>
</body>
</html>
```
FILE: styles.css
```css
* { box-sizing: border-box; }
html, body { margin: 0; height: 100%; }
body { font: 12px/16px "Noto Sans", "Noto Sans CJK SC", sans-serif; color: #000; background: #f0f0f0; overflow: hidden; }
button, input, select, textarea { font: inherit; color: inherit; margin: 0; padding: 0; border: 0; background: none; border-radius: 0; }
button { display: flex; align-items: center; justify-content: center; white-space: nowrap; }
h1, h2, ul, fieldset { margin: 0; padding: 0; font: inherit; list-style: none; }
.defs { position: absolute; width: 0; height: 0; }
.i { width: 16px; height: 16px; flex: none; }
.w { width: 12px; height: 12px; }
.c { width: 10px; height: 10px; flex: none; }
.m { font: 10px/16px "DejaVu Sans Mono", monospace; }

.app { position: relative; display: flex; flex-direction: column; height: 100vh; min-height: 600px; }

/* title bar */
.title { display: flex; align-items: center; gap: 5px; height: 23px; padding-left: 2px; background: #fff; color: #999; }
.title h1 { flex: 1; white-space: nowrap; overflow: hidden; font-family: Inter, "Noto Sans CJK SC", sans-serif; }
.winbtns { display: flex; }
.winbtns button { width: 46px; height: 20px; color: #888; }
.bubble { position: absolute; top: -30px; right: 138px; width: 48px; height: 48px; border-radius: 50%; background: #45c65c; border: 2px solid #e8e8e8; box-shadow: 0 0 0 1px #999, inset 0 0 0 1px #2c8a50, 0 2px 8px #aaa; color: #fff; font-weight: bold; line-height: 20px; padding-top: 25px; text-align: center; z-index: 3; }

/* menu and tool bars */
.menubar { display: flex; height: 30px; margin-bottom: 1px; gap: 3px; align-items: stretch; }
.menu { display: flex; gap: 11px; padding-left: 7px; }
.extra { display: flex; gap: 7px; margin-left: 8px; flex: 1; }
.band { display: flex; align-items: center; gap: 7px; background: linear-gradient(#fcfcfc, #f0f0f0); border-radius: 3px; position: relative; white-space: nowrap; }
.notice { width: 187px; justify-content: center; }
.notice a { color: #2f6900; text-decoration: none; }
.account { width: 240px; padding-left: 4px; gap: 10px; }
.t { gap: 4px; }
.off { color: #808080; }
.caret { width: 5px; height: 3px; background: #000; clip-path: polygon(0 0, 100% 0, 50% 100%); margin-left: -1px; }
.off .caret { background: #666; }
.caret.wide { margin-left: 3px; }
.sep { width: 1px; height: 16px; background: #c0c0c0; margin-right: -2px; }
.more { position: absolute; right: 2px; top: 4px; }
.more svg { width: 10px; height: 8px; }
.bars { display: flex; gap: 3px; height: 28px; margin-bottom: 1px; padding-left: 2px; }
.b1 { width: 148px; padding-left: 3px; }
.b2 { width: 548px; padding-left: 4px; }
.b3 { flex: 1; }
.b3 .boxed { border: 1px solid #777; height: 23px; padding: 0 2px; margin-right: -2px; }

/* main area */
.main { flex: 1; min-height: 0; display: flex; gap: 6px; }
.nav { width: 165px; display: flex; flex-direction: column; padding-bottom: 1px; }
.navhead { display: flex; align-items: center; gap: 8px; height: 17px; border: 1px solid #999; border-left: 0; padding-right: 3px; }
.navhead h2 { flex: 1; font-size: 13px; }
.navbtn { height: 21px; margin: 1px 1px 0; border: 1px solid #a8a8a8; border-top-color: #888; background: #f0f0f0; flex: none; }
.navbtn.cur { border-bottom: 2px solid #888; border-right: 2px solid #888; }
.navtools { display: flex; gap: 6px; height: 26px; margin: 2px 1px 0 2px; padding-left: 4px; background: linear-gradient(#fff, #f0f0f0); }
.tree { flex: 1; min-height: 0; margin: 0 1px 0 2px; padding-top: 1px; background: #fff; border: 1px solid #828790; overflow: hidden; }
.p, .kids li { display: flex; align-items: center; height: 16px; white-space: nowrap; }
.p { padding-left: 6px; }
.p .i { margin: 0 5px 0 7px; }
.kids { padding-left: 31px; }
.kids.line { background: repeating-linear-gradient(#888 0 1px, transparent 1px 2px) 12px 0 / 1px 100% no-repeat; }
.kids li::before, .list li::before { content: ""; width: 11px; height: 16px; flex: none; background: repeating-linear-gradient(#888 0 1px, transparent 1px 2px) 0 0 / 1px 100% no-repeat, repeating-linear-gradient(90deg, #888 0 1px, transparent 1px 2px) 0 8px / 100% 1px no-repeat; }
.kids li:last-child::before, .list li:last-child::before { background-size: 1px 9px, 100% 1px; }
.kids .i { margin-right: 5px; }
.sel { display: flex; align-items: center; background: #d9d9d9; }
.bk { width: 14px; height: 14px; margin-left: 1px; }
.ne { background: #ffdc20; font: bold 9px/9px "DejaVu Sans", sans-serif; align-self: flex-start; margin-left: 1px; }

.work { flex: 1; min-width: 0; display: flex; flex-direction: column; }
.b4 { height: 29px; padding-left: 4px; margin-right: 2px; }
.pick { position: relative; display: flex; align-items: center; width: 60px; height: 22px; background: #fff; margin: 0 -2px; }
.pick select { appearance: none; width: 100%; height: 22px; }
.pick .caret { position: absolute; right: 4px; }
.cols { flex: 1; min-height: 0; display: flex; gap: 4px; }
.comps { width: 184px; display: flex; flex-direction: column; padding-bottom: 1px; border-right: 1px solid #999; }
.search { display: flex; align-items: center; gap: 4px; height: 30px; padding: 3px 0 0 1px; }
.search input { width: 157px; height: 24px; border: 1px solid #777; background: #fff; padding: 0 2px 2px; }
::placeholder { color: #808080; opacity: 1; }
.search button { width: 18px; }
.listbox { flex: 1; min-height: 0; display: flex; border: 1px solid #828790; background: #fff; padding: 1px 2px 1px 0; }
.list { flex: 1; overflow: hidden; }
.list li { display: flex; align-items: center; height: 16px; padding-left: 31px; }
.list li span { display: flex; align-items: center; gap: 6px; padding: 0 4px 0 2px; font: 10px/16px "DejaVu Sans Mono", monospace; }
.list li .on { background: #316ac5; }
.list svg { width: 12px; height: 12px; }
.scroll { width: 15px; background: #f0f0f0; display: flex; flex-direction: column; align-items: center; gap: 4px; padding: 3px 0; }
.scroll i { flex: 1; width: 15px; background: #cdcdcd; margin-top: 150px; }

.props { flex: 1; min-width: 0; display: flex; flex-direction: column; }
.ptabs { height: 20px; background: #f8f8f8; }
.ptab { width: 63px; height: 20px; background: #fff; border: 1px solid #dcdcdc; border-bottom: 0; }
.pbody { flex: 1; display: flex; background: #fff; border: 1px solid #dcdcdc; padding: 4px 3px 3px 2px; margin-right: 1px; }
.pbox { flex: 1; border: 1px solid #a0a0a0; padding-right: 30px; }
.ptable { width: 100%; border-collapse: separate; border-spacing: 0; table-layout: fixed; }
.ptable th { height: 23px; background: linear-gradient(#fff, #ececec); font-weight: normal; border-right: 1px solid #c8c8c8; border-bottom: 1px solid #b8b8b8; padding: 0; }
.ptable td { height: 19px; padding: 0 0 0 20px; border-bottom: 1px solid #c8c8c8; }
.ptable .n { width: 22px; padding: 0; text-align: center; border-right: 1px solid #c8c8c8; }
.ptable .k { width: 190px; }
.ptable .a { width: 60px; }
.ptable .on td { background: #0078d7; color: #fff; }
.ptable .on .n { background: #ffd28c; color: #600040; }

/* status bar */
.status { display: flex; gap: 2px; height: 22px; padding: 2px 0 1px; background: #f6f6f6; white-space: nowrap; }
.status span { border: 1px solid #d4d4d4; background: linear-gradient(#fcfcfc, #f0f0f0); padding-left: 1px; line-height: 17px; }
.s1 { width: 148px; }
.s2 { width: 78px; }
.s3 { width: 98px; }
.s4 { width: 48px; }
.s5 { flex: 1; }
.status b { font-weight: normal; }

/* section editor window */
.editor { position: absolute; left: 492px; right: 22px; top: 132px; bottom: 65px; display: flex; flex-direction: column; padding: 1px 7px 7px; border: 1px solid #4a4a4a; background: #d7e3f1; z-index: 1; }
.editor h2 { height: 29px; margin: 0 -6px; padding: 10px 0 0 6px; line-height: 16px; background: linear-gradient(#bfcddc, #d7e3f1); color: #8f959c; }
.client { flex: 1; min-height: 0; display: flex; flex-direction: column; background: #f0f0f0; }
.etabs { display: flex; align-items: flex-end; height: 21px; }
.etabs button { height: 18px; width: 39px; border: 1px solid #d9d9d9; border-bottom: 0; padding-right: 6px; }
.etabs .cur { height: 21px; width: 46px; background: #fff; }
.page { flex: 1; min-height: 0; display: flex; flex-direction: column; margin-right: 2px; border: 1px solid #dcdcdc; background: #fff; padding: 2px 1px 2px 3px; }
.page .band { border-radius: 0; flex: none; height: 28px; }
.e1 { padding-left: 175px; }
.e2 { padding-left: 158px; }
.e2 .coord { background: #f0f0f0; padding-right: 9px; height: 16px; margin-right: -1px; }
.e2 .sep { margin-right: -6px; }
.e2 .y { margin-left: 6px; }
.spin { display: flex; width: 78px; height: 23px; border: 1px solid #777; color: #777; margin: 0 -2px 0 3px; }
.spin input { width: 60px; text-align: right; }
.spin span { display: flex; flex-direction: column; justify-content: space-between; padding: 3px 0 3px 8px; }
.spin i { width: 5px; height: 3px; background: #666; clip-path: polygon(0 0, 100% 0, 50% 100%); }
.spin i:first-child { clip-path: polygon(0 100%, 100% 100%, 50% 0); }
.canvas { flex: 1; min-height: 0; width: 100%; background: #000; }
.dim { font: 35px "Liberation Serif", serif; fill: #0f0; }
.dims { font: 12px "Noto Sans", sans-serif; fill: #b8b8b8; }
.dyn { height: 26px; padding: 2px; background: #f0f0f0; }
.dyn button { width: 58px; height: 23px; border: 1px solid #0078d7; background: #e0eef9; }
.estat { display: flex; gap: 2px; height: 26px; padding: 4px 0 0; background: #f6f6f6; }
.estat span { height: 22px; border: 1px solid #d9d9d9; background: linear-gradient(#fcfcfc, #f0f0f0); line-height: 20px; }
.xy { width: 98px; padding-left: 4px; }
.msg { flex: 1; display: flex; align-items: flex-end; justify-content: space-between; }

/* grid dialog */
.dialog { position: absolute; left: 265px; top: 190px; width: 411px; border: 1px solid #2d8ceb; background: #f0f0f0; box-shadow: 0 3px 16px rgba(0, 0, 0, .4); z-index: 2; }
.dtitle { display: flex; align-items: center; justify-content: space-between; height: 25px; padding: 0 9px 0 3px; background: #fff; }
.dbody { padding: 14px 13px 8px; }
fieldset { height: 66px; border: 1px solid #dcdcdc; padding: 0 9px 0 7px; margin-bottom: 7px; min-width: 0; }
legend { padding: 0; white-space: nowrap; line-height: 16px; }
textarea { display: block; width: 100%; height: 42px; margin-top: 1px; padding: 1px 2px; border: 1px solid #6d7680; background: #fff; resize: none; outline: none; overflow: hidden; font: 10px/16px "DejaVu Sans Mono", monospace; caret-color: #ff8c28; }
textarea::selection { background: #0078d7; color: #fff; }
.acts { display: flex; justify-content: flex-end; gap: 15px; padding-top: 5px; padding-right: 1px; }
.acts button { width: 72px; height: 23px; border: 1px solid #adadad; background: #e1e1e1; }

/* input method bar */
.ime { position: absolute; right: 0; bottom: 41px; width: 185px; height: 24px; z-index: 3; }
.ime > svg { position: absolute; left: 0; bottom: 0; }
.ime > div { display: flex; align-items: center; gap: 6px; height: 24px; padding: 0 2px 0 33px; background: #fbfdff; border: 1px solid #b8cede; border-left: 0; }

/* task bar */
.taskbar { display: flex; align-items: stretch; height: 40px; background: #020b0e; color: #fff; flex: none; }
.start { width: 48px; background: #000; }
.cortana { display: flex; align-items: center; width: 344px; background: #333; padding: 0 14px 0 9px; }
.cortana input { flex: 1; min-width: 0; font-size: 14px; line-height: 20px; padding-left: 5px; }
.cortana input::placeholder { color: #9a9a9a; }
.apps { display: flex; flex: 1; padding-left: 2px; align-items: stretch; }
.apps button { width: 49px; }
.tsep { width: 4px; height: 16px; border: solid #3c4446; border-width: 0 1px; margin: 12px 11px 0 9px; }
.run { background: linear-gradient(#76b9ed, #76b9ed) 50% 100% / 40px 2px no-repeat; }
.apps .act { background: linear-gradient(#76b9ed, #76b9ed) 50% 100% / 100% 2px no-repeat #2f393c; }
.tray { display: flex; align-items: center; text-align: center; line-height: 17px; }
.cpu { width: 50px; margin-right: 16px; }
.ticons { display: flex; align-items: center; gap: 8px; font-size: 16px; margin-right: 14px; }
.sg { margin-left: 6px; }
.clock { width: 66px; line-height: 18px; }
.note { width: 51px; height: 40px; border-right: 1px solid #444; margin-right: 4px; padding-right: 7px; }
```
FILE: script.js
```js
const names = [27, 28, 29, 30, 31, 32, 33, 34, 35, 37, 38, 39, 40, 41, 43, 44, 46, 47, 48, 49, 50, 17, 51, 52, 53, 54, 56, 57, 58, 59, 60, 61, 62, 36];
const current = 36;
document.getElementById('list').innerHTML = names.map(n =>
  `<li><span${n === current ? ' class="on"' : ''}><svg><use href="#gear"/></svg>ZDYX-${n}</span></li>`
).join('');

const first = document.getElementById('hs');
first.focus();
first.select();
```
